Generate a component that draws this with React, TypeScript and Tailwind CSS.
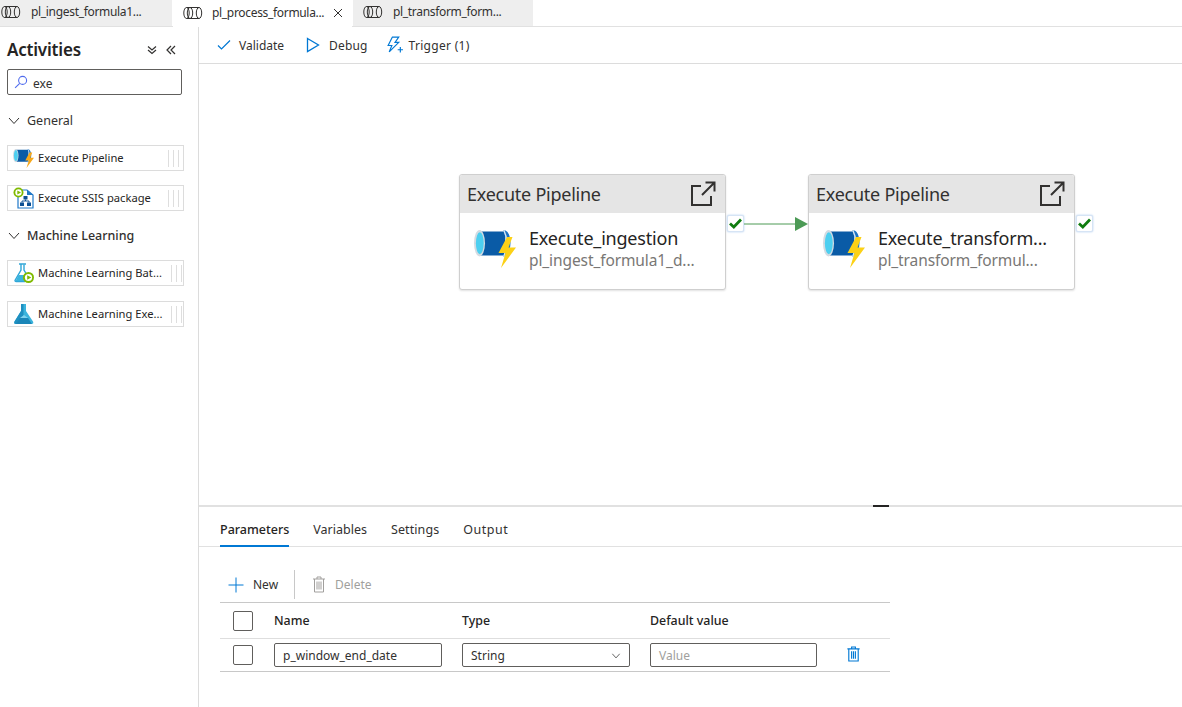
import React from "react";

const font = { fontFamily: '"Noto Sans", "Open Sans", sans-serif' };

function TabIcon() {
  return (
    <svg width="20" height="14" viewBox="0 0 20 14" fill="none" stroke="#323130" strokeWidth="1" className="shrink-0">
      <ellipse cx="3.5" cy="7" rx="2.7" ry="5.5" />
      <ellipse cx="16" cy="7" rx="2.7" ry="5.5" />
      <ellipse cx="7" cy="7" rx="2.7" ry="5.5" />
      <path d="M3.5 1.5H16M3.5 12.5H16" />
    </svg>
  );
}

function PipelineIcon({ width, bolt = "#fcd116" }: { width: number; bolt?: string }) {
  return (
    <svg width={width} height={(width * 38) / 42} viewBox="0 0 42 38" className="shrink-0">
      <path d="M5 1.5 H31 V25.5 H5 Z" fill="#0a5ba6" />
      <path d="M29 0 Q36 0 36.5 13 Q36 26.5 29 26.5 Q32 20 32 13 Q32 6 29 0Z" fill="#1f74c4" />
      <path d="M29 0 Q32 6 32 13 Q32 20 29 26.5 L30.5 26.5 Q33.5 20 33.5 13 Q33.5 6 30.5 0Z" fill="#d5e6f4" />
      <ellipse cx="5.5" cy="13.2" rx="5.5" ry="13.2" fill="#d3dbe2" />
      <ellipse cx="5.8" cy="13.2" rx="3.9" ry="11" fill="#4dcff0" />
      <path d="M33 7 L24.5 23 L31.5 23 L27 38 L42 17.5 L34.5 17.5 L38.5 7 Z" fill={bolt} />
    </svg>
  );
}

function SsisIcon() {
  return (
    <svg width="21" height="22" viewBox="0 0 21 22" className="shrink-0">
      <path d="M5 3H14L20 8V21H5Z" fill="#fff" stroke="#1f78c8" strokeWidth="1.2" />
      <path d="M14 3V8H20Z" fill="#1f78c8" />
      <rect x="10.5" y="9" width="4" height="3.5" fill="#0b4f93" />
      <rect x="7" y="15.5" width="4" height="3.5" fill="#0b4f93" />
      <rect x="14" y="15.5" width="4" height="3.5" fill="#0b4f93" />
      <path d="M12.5 12.5V14H9V15.5M12.5 14H16V15.5" stroke="#0b4f93" fill="none" />
      <circle cx="5.5" cy="5.5" r="5" fill="#7fba00" />
      <circle cx="5.5" cy="5.5" r="3.2" fill="#fff" />
      <path d="M4.3 3.5L8 5.5L4.3 7.5Z" fill="#7fba00" />
    </svg>
  );
}

function FlaskOutlineIcon() {
  return (
    <svg width="21" height="22" viewBox="0 0 21 22" className="shrink-0">
      <path d="M6 2H13M8 2.5V8L2 18.5Q2 19.5 3 19.5H12" fill="none" stroke="#30a6d8" strokeWidth="1.4" />
      <path d="M11 2.5V8L14 13" fill="none" stroke="#30a6d8" strokeWidth="1.4" />
      <path d="M5.5 13H13L12 19H2.5Z" fill="#3bb4dd" />
      <circle cx="15.5" cy="15.5" r="5.5" fill="#7fba00" />
      <circle cx="15.5" cy="15.5" r="3.6" fill="#fff" />
      <path d="M14.2 13.2L18.3 15.5L14.2 17.8Z" fill="#7fba00" />
    </svg>
  );
}

function FlaskFilledIcon() {
  return (
    <svg width="21" height="22" viewBox="0 0 21 22" className="shrink-0">
      <path d="M8 1H13V8L20 18.5Q21 21 18.5 21H3Q0.5 21 1.5 18.5L8 8Z" fill="#3bb4dd" />
      <path d="M8 1H10.5V12L5 21H3Q0.5 21 1.5 18.5L8 8Z" fill="#1f8fc0" />
      <path d="M3 21L7 15H15L19 21Z" fill="#1b86b8" />
      <path d="M7 15L11 12L15 15Z" fill="#7fd3ee" />
    </svg>
  );
}

function Grip({ shift }: { shift?: boolean }) {
  return (
    <div className={`flex h-[17px] gap-[4px] ${shift ? "mr-[1px]" : "mr-[4px]"}`}>
      <span className="w-px bg-[#dedede]" />
      <span className="w-px bg-[#dedede]" />
      <span className="w-px bg-[#dedede]" />
    </div>
  );
}

function Chevron({ className = "" }: { className?: string }) {
  return (
    <svg width="12" height="8" viewBox="0 0 12 8" fill="none" stroke="#323130" strokeWidth="1" className={className}>
      <path d="M1 1L6 6.5L11 1" />
    </svg>
  );
}

function ActivityItem({ icon, label, shift }: { icon: React.ReactNode; label: string; shift?: boolean }) {
  return (
    <div className="flex h-[26px] w-[177px] items-center border border-[#dcdcdc] pl-[5px] text-[11.2px] text-[#252423]">
      <div className="w-[25px]">{icon}</div>
      <span className="flex-1 whitespace-nowrap">{label}</span>
      <Grip shift={shift} />
    </div>
  );
}

function Check() {
  return (
    <div className="absolute flex h-[17px] w-[17px] items-center justify-center rounded-[2px] border border-[#d6e4f5] bg-white shadow-[0_0_2px_#a9c9ef]">
      <svg width="13" height="11" viewBox="0 0 13 11" fill="none" stroke="#107c10" strokeWidth="2.8">
        <path d="M1 5.5L4.8 9L12 1.5" />
      </svg>
    </div>
  );
}

function Node({ left, title, sub }: { left: string; title: string; sub: string }) {
  return (
    <div className={`absolute top-[110px] h-[116px] w-[267px] overflow-hidden rounded-[3px] border border-[#cfcfcf] bg-white shadow-[0_1px_2px_rgba(0,0,0,0.12)] ${left}`}>
      <div className="flex h-[38px] items-center justify-between bg-[#e5e5e5] pl-[7px] pr-[9px] pt-[1px] text-[18px] text-[#323130]">
        <span className="tracking-[-0.25px]">Execute Pipeline</span>
        <svg width="26" height="26" viewBox="0 0 26 26" fill="none" stroke="#323130" strokeWidth="2" className="-mt-[1px]">
          <path d="M11 5H2V24H21V15M12 14L24.5 1.5M15.5 1.5H24.5V10.5" />
        </svg>
      </div>
      <div className="flex pl-[14px] pt-[13px]">
        <div className="mt-[4px] w-[55px]">
          <PipelineIcon width={42} />
        </div>
        <div className="min-w-0 leading-none">
          <div className="text-[18px] leading-[24px] tracking-[-0.2px] text-[#252423]">{title}</div>
          <div className="text-[15.5px] leading-[20px] tracking-[-0.1px] text-[#797775]">{sub}</div>
        </div>
      </div>
    </div>
  );
}

function Input({ children, className = "" }: { children: React.ReactNode; className?: string }) {
  return (
    <div className={`flex h-[24px] items-center rounded-[2px] border border-[#605e5c] px-[8px] pt-[1px] text-[12px] ${className}`}>
      {children}
    </div>
  );
}

export default function App() {
  return (
    <div className="flex h-[707px] w-[1182px] flex-col overflow-hidden bg-white text-[#323130]" style={font}>
      {/* Tabs */}
      <div className="flex h-[27px] shrink-0 border-b border-[#e1e1e1] text-[12px]">
        <div className="flex w-[172px] items-center gap-[10px] bg-[#eeeeee] pb-[2px] pl-[1px]">
          <TabIcon />
          <span className="tracking-[-0.32px]">pl_ingest_formula1...</span>
        </div>
        <div className="relative z-10 -mb-px ml-px flex w-[179px] items-center bg-white pb-[2px] pl-[10px]">
          <TabIcon />
          <span className="ml-[9px] tracking-[-0.32px]">pl_process_formula...</span>
          <svg width="10" height="10" viewBox="0 0 10 10" stroke="#323130" strokeWidth="1" className="ml-[9px]">
            <path d="M1 1L9 9M9 1L1 9" />
          </svg>
        </div>
        <div className="ml-px flex w-[180px] items-center bg-[#eeeeee] pb-[2px] pl-[10px]">
          <TabIcon />
          <span className="ml-[10px] tracking-[-0.32px]">pl_transform_form...</span>
        </div>
      </div>

      <div className="flex min-h-0 flex-1">
        {/* Sidebar */}
        <aside className="w-[199px] shrink-0 border-r border-[#dcdcdc] pl-[7px]">
          <div className="flex h-[42px] items-center justify-between pr-[22px] pt-[4px]">
            <span className="text-[17px] font-semibold tracking-[-0.2px] text-[#252423]">Activities</span>
            <div className="flex items-center gap-[9px]">
              <svg width="10" height="10" viewBox="0 0 10 10" fill="none" stroke="#323130" strokeWidth="1.2">
                <path d="M1 1.5L5 5L9 1.5M1 5L5 8.5L9 5" />
              </svg>
              <svg width="10" height="10" viewBox="0 0 10 10" fill="none" stroke="#323130" strokeWidth="1.2">
                <path d="M5 1L1 5L5 9M9 1L5 5L9 9" />
              </svg>
            </div>
          </div>
          <div className="flex h-[26px] w-[175px] items-center rounded-[2px] border border-[#605e5c] pl-[6px] text-[12px]">
            <svg width="14" height="14" viewBox="0 0 13 13" fill="none" stroke="#4f6bed" strokeWidth="1">
              <circle cx="8" cy="5" r="3.7" />
              <path d="M5.3 7.7L1 12" />
            </svg>
            <span className="ml-[5px] pt-[3px]">exe</span>
          </div>
          <div className="mt-[17px] flex h-[18px] items-center gap-[7px] pl-[1px] text-[12.5px]">
            <Chevron />
            <span>General</span>
          </div>
          <div className="mt-[15px] flex flex-col gap-[14px]">
            <ActivityItem icon={<PipelineIcon width={21} bolt="#f7a81b" />} label="Execute Pipeline" />
            <ActivityItem icon={<SsisIcon />} label="Execute SSIS package" />
          </div>
          <div className="mt-[16px] flex h-[18px] items-center gap-[7px] pl-[1px] text-[12.5px] font-medium">
            <Chevron />
            <span>Machine Learning</span>
          </div>
          <div className="mt-[15px] flex flex-col gap-[15px]">
            <ActivityItem icon={<FlaskOutlineIcon />} label="Machine Learning Bat..." shift />
            <ActivityItem icon={<FlaskFilledIcon />} label="Machine Learning Exe..." shift />
          </div>
        </aside>

        <main className="flex min-w-0 flex-1 flex-col">
          {/* Toolbar */}
          <div className="flex h-[37px] shrink-0 items-center border-b border-[#dcdcdc] pl-[18px] text-[12px]">
            <svg width="14" height="12" viewBox="0 0 14 12" fill="none" stroke="#0078d4" strokeWidth="1.2">
              <path d="M1 6.5L4.5 10L13 1.5" />
            </svg>
            <span className="ml-[8px] pt-[1px]">Validate</span>
            <svg width="14" height="16" viewBox="0 0 14 16" fill="none" stroke="#0078d4" strokeWidth="1.3" className="ml-[22px]">
              <path d="M1.5 1.5L12.5 8L1.5 14.5Z" />
            </svg>
            <span className="ml-[9px] pt-[1px] tracking-[0.15px]">Debug</span>
            <svg width="17" height="18" viewBox="0 0 16 17" fill="none" stroke="#0078d4" strokeWidth="1.1" className="ml-[18px]">
              <path d="M6 1H12L8.5 6H12L3 15L5.5 9H2L6 1ZM11 13H16M13.5 10.5V15.5" />
            </svg>
            <span className="ml-[6px] pt-[1px] tracking-[0.3px]">Trigger (1)</span>
          </div>

          {/* Canvas */}
          <div className="relative h-[441px] shrink-0">
            <Node left="left-[260px]" title="Execute_ingestion" sub="pl_ingest_formula1_d..." />
            <Node left="left-[609px]" title="Execute_transform..." sub="pl_transform_formul..." />
            <div className="absolute left-[528px] top-[151px]"><Check /></div>
            <div className="absolute left-[877px] top-[151px]"><Check /></div>
            <svg width="66" height="16" viewBox="0 0 66 16" className="absolute left-[545px] top-[152px]">
              <path d="M0 8H52" stroke="#4c9a55" strokeWidth="1" />
              <path d="M51 1L64 8L51 15Z" fill="#4c9a55" />
            </svg>
          </div>

          {/* Bottom panel */}
          <div className="relative flex-1 border-t-2 border-[#e1e1e1]">
            <div className="absolute left-[674px] top-[-2px] h-[2px] w-[16px] bg-[#252423]" />
            <div className="flex h-[40px] items-start gap-[24px] border-b border-[#e1e1e1] pl-[21px] pt-[14px] text-[12.5px]">
              <div className="h-[26px] border-b-2 border-[#0078d4] font-medium text-[#252423]">Parameters</div>
              <div>Variables</div>
              <div className="tracking-[0.1px]">Settings</div>
              <div className="tracking-[0.5px]">Output</div>
            </div>
            <div className="ml-[21px] w-[670px]">
              <div className="flex h-[56px] items-end border-b border-[#c8c8c8] pb-[3px] text-[12px]">
                <div className="flex h-[29px] items-center border-r border-[#c8c8c8] pl-[8px] pr-[16px]">
                  <svg width="16" height="16" viewBox="0 0 16 16" stroke="#0078d4" strokeWidth="1">
                    <path d="M8 0.5V15.5M0.5 8H15.5" />
                  </svg>
                  <span className="ml-[9px]">New</span>
                </div>
                <div className="flex h-[29px] items-center pl-[17px] text-[#a19f9d]">
                  <svg width="14" height="17" viewBox="0 0 14 17" fill="none" stroke="#a19f9d" strokeWidth="1">
                    <path d="M1 3H13M5 3V1H9V3M2.5 3V16H11.5V3" />
                    <path d="M5 5.5V13.5M7 5.5V13.5M9 5.5V13.5" />
                  </svg>
                  <span className="ml-[9px]">Delete</span>
                </div>
              </div>
              <div className="flex h-[36px] items-center border-b border-[#dedede] text-[12.4px] font-medium text-[#252423]">
                <div className="ml-[13px] h-[20px] w-[20px] rounded-[2px] border border-[#605e5c]" />
                <div className="ml-[21px] w-[188px] pt-[1px]">Name</div>
                <div className="w-[188px] pt-[1px]">Type</div>
                <div className="pt-[1px]">Default value</div>
              </div>
              <div className="flex h-[33px] items-center border-b border-[#c8c8c8]">
                <div className="ml-[13px] h-[20px] w-[20px] rounded-[2px] border border-[#605e5c]" />
                <Input className="ml-[21px] w-[168px]">p_window_end_date</Input>
                <Input className="ml-[20px] w-[168px] justify-between">
                  <span>String</span>
                  <Chevron className="-mr-[1px] scale-75" />
                </Input>
                <Input className="ml-[20px] w-[167px] text-[#a19f9d]">Value</Input>
                <svg width="15" height="16" viewBox="0 0 14 17" fill="none" stroke="#0078d4" strokeWidth="1.2" className="-mt-[2px] ml-[29px]">
                  <path d="M0.5 3H13.5M5 3V1H9V3M2 3V16H12V3" />
                  <path d="M5 5.5V13.5M7 5.5V13.5M9 5.5V13.5" />
                </svg>
              </div>
            </div>
          </div>
        </main>
      </div>
    </div>
  );
}
